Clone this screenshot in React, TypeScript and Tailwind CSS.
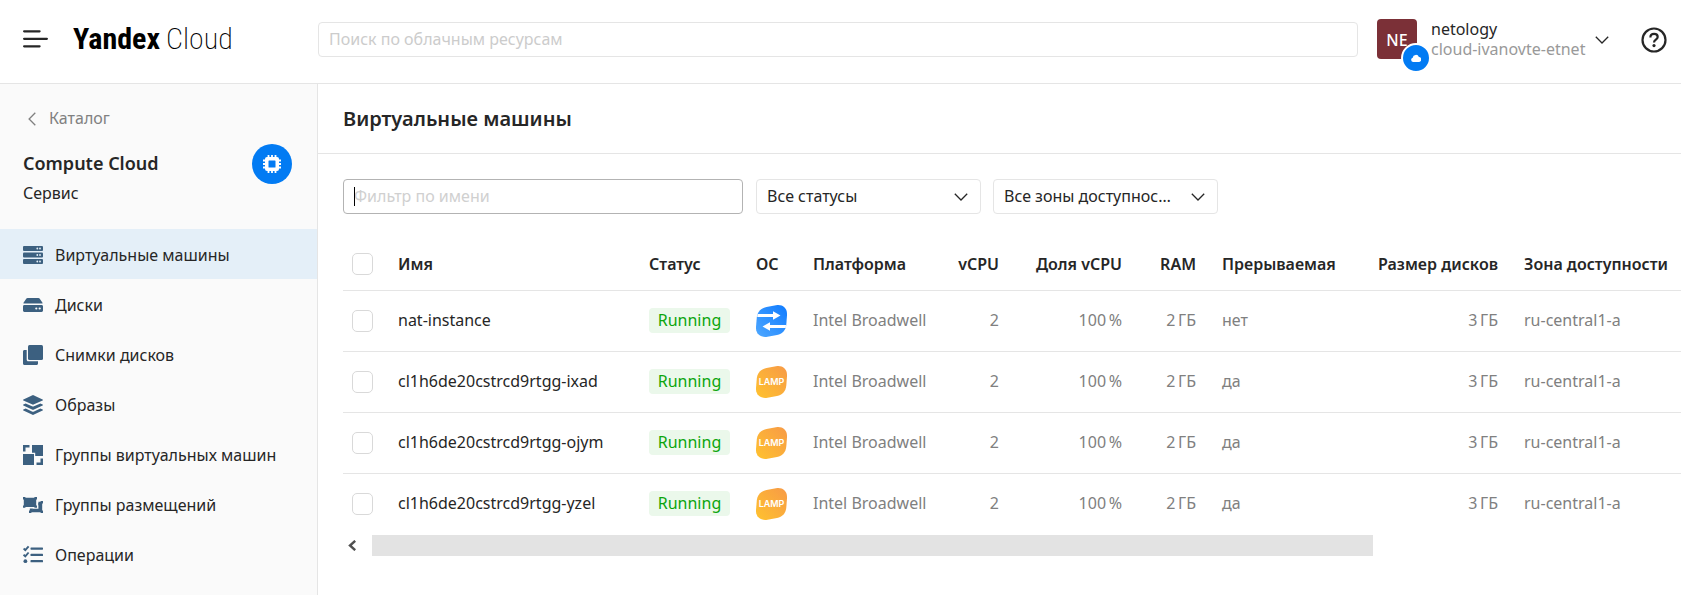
import type { ReactNode } from "react";

type NavItem = { label: string; icon: ReactNode; active?: boolean };

type Machine = { name: string; os: "nat" | "lamp"; preemptible: string };

function Icon({ children }: { children: ReactNode }) {
  return (
    <svg viewBox="0 0 20 20" className="size-5 shrink-0 text-[#3c6080]" fill="currentColor" aria-hidden="true">
      {children}
    </svg>
  );
}

const navItems: NavItem[] = [
  {
    label: "Виртуальные машины",
    active: true,
    icon: (
      <Icon>
        {[1, 7.5, 14].map((y) => (
          <g key={y}>
            <rect x="0" y={y} width="20" height="5" rx="1" />
            <circle cx="14.3" cy={y + 2.5} r="0.9" fill="#e4eff8" />
            <circle cx="17" cy={y + 2.5} r="0.9" fill="#e4eff8" />
          </g>
        ))}
      </Icon>
    ),
  },
  {
    label: "Диски",
    icon: (
      <Icon>
        <path d="M4.600 3h10.800c.5 0 .9.2 1.200.6l2.900 4.200c.2.400.1.800-.5.800H1c-.6 0-.7-.4-.5-.8l2.900-4.200c.3-.4.7-.6 1.200-.6Z" />
        <path d="M1.400 10h17.200c.8 0 1.400.6 1.400 1.400v4.200c0 .8-.6 1.400-1.400 1.400H1.400C.6 17 0 16.400 0 15.600v-4.200C0 10.600.6 10 1.400 10Z" />
        <circle cx="13.300" cy="13.500" r="1.100" fill="#fafafa" />
        <circle cx="16.700" cy="13.500" r="1.100" fill="#fafafa" />
      </Icon>
    ),
  },
  {
    label: "Снимки дисков",
    icon: (
      <Icon>
        <rect x="5" y="0" width="15" height="15" rx="1.500" />
        <path d="M1.500 5H3.700v9.800c0 .9.600 1.500 1.500 1.500H15v2.200c0 .9-.6 1.500-1.500 1.500h-12C.6 20 0 19.400 0 18.500v-12C0 5.600.6 5 1.500 5Z" />
      </Icon>
    ),
  },
  {
    label: "Образы",
    icon: (
      <Icon>
        <path d="M9.500.2a1.200 1.200 0 0 1 1 0l9.100 4.200c.5.200.5.800 0 1l-9.100 4.200a1.200 1.200 0 0 1-1 0L.4 5.400c-.5-.2-.5-.8 0-1Z" />
        <path d="m.4 9.500 2.300-1 6.300 2.800c.7.300 1.300.3 2 0l6.300-2.800 2.300 1c.5.200.5.800 0 1l-9.100 4.200a1.200 1.200 0 0 1-1 0L.4 10.500c-.5-.2-.5-.8 0-1Z" />
        <path d="m.4 14.600 2.300-1L9 16.400c.7.300 1.300.3 2 0l6.300-2.800 2.300 1c.5.200.5.800 0 1l-9.100 4.200a1.200 1.200 0 0 1-1 0L.4 15.600c-.5-.2-.5-.8 0-1Z" />
      </Icon>
    ),
  },
  {
    label: "Группы виртуальных машин",
    icon: (
      <Icon>
        <path d="M9 0h11v11h-7.800V7.800H9Z" />
        <path d="M0 9h11v11H0Z" />
        <path d="M0 0h6.500v2.500h-4v4H0Z" />
        <path d="M20 13.500V20h-6.500v-2.500h4v-4Z" />
      </Icon>
    ),
  },
  {
    label: "Группы размещений",
    icon: (
      <Icon>
        <path d="M0 2h2.400v.8h9V2H14v2.400h-.8v6h.8v2.400h-2.600V12h-9v.8H0v-2.400h.8v-6H0Z" />
        <path d="M15.400 6.800h2.200V6H20v2.400h-.8v7.200h.8V18h-2.400v-.8H8.400V18H6v-2.400h.8v-2.200h3.100v1.200h6.300v-4.400h-.8Z" />
        <path d="M15.400 8H18v8H10v-2.200h5.400Z" />
      </Icon>
    ),
  },
  {
    label: "Операции",
    icon: (
      <Icon>
        <rect x="7.500" y="2.500" width="12.500" height="2.200" rx=".6" />
        <rect x="7.500" y="8.800" width="12.500" height="2.200" rx=".6" />
        <rect x="7.500" y="15.100" width="12.500" height="2.200" rx=".6" />
        <circle cx="2.400" cy="16.200" r="1.900" />
        <path d="m.6 3.500 1.700 1.600L5.600 1.300M.6 9.700l1.700 1.600 3.300-3.800" fill="none" stroke="currentColor" strokeWidth="1.900" />
      </Icon>
    ),
  },
];

const machines: Machine[] = [
  { name: "nat-instance", os: "nat", preemptible: "нет" },
  { name: "cl1h6de20cstrcd9rtgg-ixad", os: "lamp", preemptible: "да" },
  { name: "cl1h6de20cstrcd9rtgg-ojym", os: "lamp", preemptible: "да" },
  { name: "cl1h6de20cstrcd9rtgg-yzel", os: "lamp", preemptible: "да" },
];

const columns = [
  { title: "Имя", width: "w-[251px]", align: "text-left" },
  { title: "Статус", width: "w-[107px]", align: "text-left" },
  { title: "ОС", width: "w-[57px]", align: "text-left" },
  { title: "Платформа", width: "w-[134px]", align: "text-left" },
  { title: "vCPU", width: "w-[78px]", align: "text-right" },
  { title: "Доля vCPU", width: "w-[123px]", align: "text-right" },
  { title: "RAM", width: "w-[74px]", align: "text-right" },
  { title: "Прерываемая", width: "w-[136px]", align: "text-left" },
  { title: "Размер дисков", width: "w-[166px]", align: "text-right" },
  { title: "Зона доступности", width: "", align: "text-left" },
];

const blob =
  "M10.500 2 20 .3C26.800-.9 31.500 3.300 31 10.200l-.7 9.300c-.5 5.800-3.900 9.500-9.300 10.500l-9.500 1.700C4.700 32.900-.4 28.900 0 22l.8-9.500C1.300 6.700 5 3 10.500 2Z";

function OsIcon({ os }: { os: Machine["os"] }) {
  if (os === "nat") {
    return (
      <svg viewBox="0 0 31 32" className="block h-8 w-[31px]" role="img" aria-label="NAT">
        <defs>
          <linearGradient id="nat-fill" x1="0" y1="1" x2="1" y2="0">
            <stop offset="0" stopColor="#4fa8ff" />
            <stop offset="1" stopColor="#0f7bff" />
          </linearGradient>
        </defs>
        <path d={blob} fill="url(#nat-fill)" />
        <path d="M1.500 9H17V6.200l7.500 4.300-7.500 4.300V12H1.200ZM29.800 23H14v2.800l-7.500-4.300 7.500-4.300V20h16Z" fill="#fff" />
      </svg>
    );
  }
  return (
    <svg viewBox="0 0 31 32" className="block h-8 w-[31px]" role="img" aria-label="LAMP">
      <defs>
        <linearGradient id="lamp-fill" x1="0" y1="1" x2="1" y2="0">
          <stop offset="0" stopColor="#ffc22e" />
          <stop offset="1" stopColor="#f79a47" />
        </linearGradient>
      </defs>
      <path d={blob} fill="url(#lamp-fill)" />
      <text x="15.500" y="19.400" textAnchor="middle" fill="#fff" fontSize="9" fontWeight="600" fontFamily="Inter, sans-serif">
        LAMP
      </text>
    </svg>
  );
}

function Chevron({ className }: { className: string }) {
  return (
    <svg viewBox="0 0 14 8" className={className} fill="none" stroke="currentColor" strokeWidth="1.300" aria-hidden="true">
      <path d="m.8.8 6.200 6.200L13.200.8" />
    </svg>
  );
}

function Checkbox({ label }: { label: string }) {
  return (
    <input
      type="checkbox"
      aria-label={label}
      className="block h-[22px] w-[21px] appearance-none rounded-[5px] border border-[#d9d9d9] bg-white checked:bg-[#027bf3]"
    />
  );
}

function FilterSelect({ label, options }: { label: string; options: string[] }) {
  return (
    <div className="relative">
      <select
        aria-label={label}
        className="h-[35px] w-[225px] appearance-none truncate rounded border border-[#e5e5e5] bg-white pr-11 pb-0.5 pl-2.5 text-[#262626]"
      >
        {options.map((option) => (
          <option key={option}>{option}</option>
        ))}
      </select>
      <Chevron className="pointer-events-none absolute top-3.5 right-[13px] h-2 w-3.5 text-[#262626]" />
    </div>
  );
}

function Header() {
  return (
    <header className="flex h-21 items-start border-b border-[#e5e5e5] bg-white pr-3.5">
      <div className="flex w-[318px] shrink-0 items-center gap-[25px] pt-[17px] pl-[23px]">
        <button type="button" aria-label="Меню">
          <svg viewBox="0 0 25 18" className="block h-[18px] w-[25px]" fill="none" stroke="#262626" strokeWidth="2.200" strokeLinecap="round">
            <path d="M1.100 1.300h15.500M1.100 8.800h22.800M1.100 16.300h15.500" />
          </svg>
        </button>
        <a href="#" className="flex gap-1.5 font-['Liberation_Sans_Narrow','Roboto_Condensed','Open_Sans_Condensed','Noto_Sans',sans-serif] text-[30px] leading-[44px] whitespace-nowrap text-black">
          <span className="font-bold">Yandex</span>
          <span className="font-extralight">Cloud</span>
        </a>
      </div>
      <input
        type="search"
        aria-label="Поиск"
        placeholder="Поиск по облачным ресурсам"
        className="mt-[22px] h-[35px] min-w-0 flex-1 rounded border border-[#e5e5e5] bg-white px-2.5 pb-0.5 placeholder:text-[#cccccc] focus:outline-none"
      />
      <button type="button" className="mt-[19px] ml-[19px] flex items-start text-left whitespace-nowrap">
        <span className="relative flex size-10 items-center justify-center rounded bg-[#7b3037] pt-0.5 font-medium text-white">
          NE
          <span className="absolute top-6 left-6 flex size-[30px] items-center justify-center rounded-full border-2 border-white bg-[#027bf3]">
            <svg viewBox="0 0 10 8" className="h-2 w-2.5" fill="#fff" aria-hidden="true">
              <path d="M2.200 8A2.200 2.200 0 0 1 1.700 3.700 3.200 3.200 0 0 1 7.900 3 2.500 2.500 0 0 1 7.600 8Z" />
            </svg>
          </span>
        </span>
        <span className="ml-3.5 w-[152px] leading-5">
          <span className="block">netology</span>
          <span className="block text-[#999999]">cloud-ivanovte-etnet</span>
        </span>
        <Chevron className="mt-[17px] ml-3 h-2 w-3.5" />
      </button>
      <button type="button" aria-label="Помощь" className="mt-[27px] ml-8">
        <svg viewBox="0 0 26 26" className="block size-[26px]" fill="none" stroke="#262626" aria-hidden="true">
          <circle cx="13" cy="13" r="11.500" strokeWidth="2.200" />
          <path d="M9.400 10.400c0-2.200 1.500-3.500 3.700-3.500 2.100 0 3.600 1.200 3.600 3.100 0 2.700-3.700 2.600-3.700 5.400" strokeWidth="2.200" />
          <circle cx="13" cy="18.600" r="1.600" fill="#262626" stroke="none" />
        </svg>
      </button>
    </header>
  );
}

function Sidebar() {
  return (
    <aside className="w-[318px] shrink-0 border-r border-[#e5e5e5] bg-[#fafafa]">
      <a href="#" className="mt-[23px] ml-7 flex w-fit items-center gap-[13px] leading-[22px] text-[#808080]">
        <svg viewBox="0 0 8 14" className="mt-0.5 h-3.5 w-2" fill="none" stroke="currentColor" strokeWidth="1.300" aria-hidden="true">
          <path d="M7.300.8 1.100 7l6.200 6.200" />
        </svg>
        Каталог
      </a>
      <div className="mt-[15px] flex items-start justify-between pr-[25px] pl-[23px]">
        <div>
          <h2 className="text-lg leading-[38px] font-semibold">Compute Cloud</h2>
          <p className="leading-[22px]">Сервис</p>
        </div>
        <span className="flex size-10 items-center justify-center rounded-full bg-[#027bf3]">
          <svg viewBox="0 0 18 18" className="size-[18px]" aria-hidden="true">
            <path d="M5.500 0v18M9 0v18M12.500 0v18M0 5.500h18M0 9h18M0 12.500h18" stroke="#fff" strokeWidth="1.800" />
            <rect x="2" y="2" width="14" height="14" rx="2" fill="#fff" />
            <rect x="5.500" y="5.500" width="7" height="7" rx=".6" fill="#027bf3" />
          </svg>
        </span>
      </div>
      <nav className="mt-[25px]">
        <ul>
          {navItems.map((item) => (
            <li key={item.label}>
              <a
                href="#"
                className={
                  item.active
                    ? "flex h-[50px] items-center gap-3 bg-[#e4eff8] pt-px pl-[23px] whitespace-nowrap"
                    : "flex h-[50px] items-center gap-3 pt-px pl-[23px] whitespace-nowrap"
                }
              >
                {item.icon}
                {item.label}
              </a>
            </li>
          ))}
        </ul>
      </nav>
    </aside>
  );
}

function MachinesTable() {
  return (
    <table className="w-full min-w-[1338px] table-fixed border-collapse whitespace-nowrap">
      <thead>
        <tr className="h-[51px] border-b border-[#e5e5e5]">
          <th className="w-[42px] pl-[9px]">
            <Checkbox label="Выбрать все" />
          </th>
          {columns.map((column) => (
            <th key={column.title} className={`${column.width} ${column.align} px-[13px] font-semibold`}>
              {column.title}
            </th>
          ))}
        </tr>
      </thead>
      <tbody className="text-[#808080]">
        {machines.map((machine) => (
          <tr key={machine.name} className="h-[61px] border-b border-[#e5e5e5] last:border-b-0">
            <td className="pl-[9px]">
              <Checkbox label={machine.name} />
            </td>
            <td className="px-[13px] pb-0.5 text-[#262626]">{machine.name}</td>
            <td className="px-[13px]">
              <span className="flex h-[25px] w-[81px] items-center justify-center rounded bg-[#ebf8eb] pb-0.5 text-[#0ca50c]">Running</span>
            </td>
            <td className="px-[13px]">
              <OsIcon os={machine.os} />
            </td>
            <td className="px-[13px] pb-0.5">Intel Broadwell</td>
            <td className="px-[13px] pb-0.5 text-right">2</td>
            <td className="px-[13px] pb-0.5 text-right">100&#8239;%</td>
            <td className="px-[13px] pb-0.5 text-right">2&#8239;ГБ</td>
            <td className="px-[13px] pb-0.5">{machine.preemptible}</td>
            <td className="px-[13px] pb-0.5 text-right">3&#8239;ГБ</td>
            <td className="px-[13px] pb-0.5">ru-central1-a</td>
          </tr>
        ))}
      </tbody>
    </table>
  );
}

export default function App() {
  return (
    <div className="flex min-h-screen flex-col overflow-hidden bg-white font-['Noto_Sans',sans-serif] text-base text-[#262626]">
      <Header />
      <div className="flex flex-1">
        <Sidebar />
        <main className="min-w-0 flex-1">
          <h1 className="flex h-[70px] items-center border-b border-[#e5e5e5] pl-[25px] text-xl font-semibold">
            Виртуальные машины
          </h1>
          <div className="pl-[25px]">
            <div className="flex gap-3 pt-[25px]">
              <div className="relative mr-px">
                <input
                  type="text"
                  aria-label="Фильтр по имени"
                  placeholder="Фильтр по имени"
                  className="h-[35px] w-[400px] rounded border border-[#b3b3b3] bg-white px-2.5 pb-0.5 placeholder:text-[#d0d0d0] focus:outline-none"
                />
                <span className="pointer-events-none absolute top-2 left-[11px] h-[19px] w-px bg-black" />
              </div>
              <FilterSelect label="Статус" options={["Все статусы", "Running", "Stopped"]} />
              <FilterSelect label="Зона доступности" options={["Все зоны доступности", "ru-central1-a", "ru-central1-b"]} />
            </div>
            <div className="mt-[25px] overflow-hidden">
              <MachinesTable />
              <div className="mt-px flex h-[21px] w-[77%]">
                <button type="button" aria-label="Прокрутить влево" className="flex w-[29px] items-center pl-[5px]">
                  <svg viewBox="0 0 8 11" className="h-[11px] w-2" fill="none" stroke="#505050" strokeWidth="2.400" aria-hidden="true">
                    <path d="M7.200.8 2 5.500l5.200 4.700" />
                  </svg>
                </button>
                <div className="flex-1 bg-[#e3e3e3]" />
              </div>
            </div>
          </div>
        </main>
      </div>
    </div>
  );
}
